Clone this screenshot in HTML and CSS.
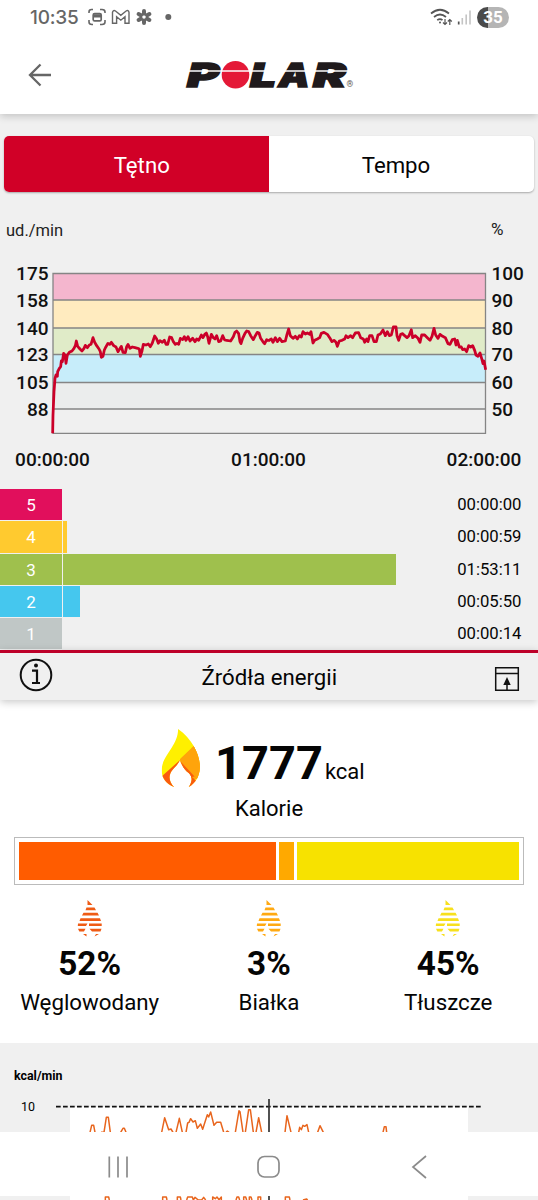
FILE: index.html
```html
<!DOCTYPE html>
<html lang="pl">
<head>
<meta charset="utf-8">
<meta name="viewport" content="width=device-width">
<title>Polar</title>
<link rel="stylesheet" href="styles.css">
</head>
<body>
<div class="screen">
  <header class="top">
    <div class="status">
      <span class="clock">10:35</span>
      <svg class="notif" width="86" height="20" viewBox="0 0 86 20" fill="none" stroke="#666" stroke-width="1.6">
        <path d="M1 5V4q0-2.500 2.500-2.500H5M12 1.500h2q3 0 3 2.500v1M17 12v2q0 2.500-3 2.500h-2M5 16.500H4q-3 0-3-2.500v-2"/>
        <rect x="5.200" y="5.600" width="8" height="7.200" rx="1.400" stroke-width="1.700"/><path d="M5.500 7.200h7.500M6 8.500h7" stroke-width="2"/>
        <path d="M24.500 15.300V4.300q.8-2.800 3-1.300l5.300 4.300 5.300-4.300q2.300-1.300 2.900 1.300v11h-4V8.700l-4.200 3.500-4.200-3.500v6.600z" stroke-width="1.400"/>
        <g stroke-width="4" stroke-linecap="round"><path d="M56 3v2.500M56 12.500V15M50.600 6l2.200 1.300M59.200 10.700l2.200 1.300M61.400 6l-2.200 1.300M52.800 10.700L50.600 12"/></g>
        <circle cx="56" cy="9" r="3" stroke-width="2"/>
        <circle cx="80.300" cy="9" r="3" fill="#666" stroke="none"/>
      </svg>
      <svg class="signal" width="42" height="20" viewBox="0 0 42 20" fill="none" stroke="#555" stroke-width="1.700">
        <path d="M1 5.500q9-7.500 18 0M4 9q6-5 12 0M7.200 12.200q2.800-2.200 5.300 0"/>
        <circle cx="10" cy="14.500" r="1" fill="#555" stroke="none"/>
        <path d="M15 11v5.500M13 14.500l2 2 2-2M19.800 17v-5.500M17.800 13.500l2-2 2 2" stroke-width="1.200"/>
        <path d="M28.700 13.500v3" stroke-width="1.700"/>
        <path d="M32.300 10v6.500M36.200 6.500v10M40 2.500v14" stroke="#c4c4c4" stroke-width="1.600"/>
      </svg>
      <span class="battery">35</span>
    </div>
    <div class="bar">
      <svg class="back" width="24" height="24" viewBox="0 0 24 24" fill="none" stroke="#666" stroke-width="2.300"><path d="M23 12H2.500M12.500 1.500L2 12l10.500 10.500"/></svg>
      <svg class="logo" width="180" height="50" viewBox="0 -10 180 50">
        <g class="wordmark"><text x="2" y="26.500" textLength="32" lengthAdjust="spacingAndGlyphs">P</text>
        <text x="65" y="26.500" textLength="26" lengthAdjust="spacingAndGlyphs">L</text>
        <text x="93.500" y="26.500" textLength="31" lengthAdjust="spacingAndGlyphs">A</text>
        <text x="128" y="26.500" textLength="33" lengthAdjust="spacingAndGlyphs">R</text></g>
        <circle cx="50.500" cy="14.700" r="13.800" fill="#e41937"/>
        <path d="M0 11h166" stroke="#fff" stroke-width="1.700"/>
        <text class="reg" x="161.500" y="26.500">®</text>
      </svg>
    </div>
  </header>

  <div class="tabs"><div class="tab on">Tętno</div><div class="tab">Tempo</div></div>

  <svg class="hr" width="538" height="280" viewBox="0 215 538 280">
    <text class="unit" x="6" y="236">ud./min</text><text class="unit" x="491" y="235" textLength="12.500" lengthAdjust="spacingAndGlyphs">%</text>
    <path d="M53 273.500h432v26.500H53z" fill="#f4b6ce"/>
    <path d="M53 300h432v28H53z" fill="#ffebbf"/>
    <path d="M53 328h432v26.500H53z" fill="#e0ebc8"/>
    <path d="M53 354.500h432v28H53z" fill="#c7edfa"/>
    <path d="M53 382.500h432v26.500H53z" fill="#ebeded"/>
    <path d="M53 273.500h432.500v159.800H53zM53 300h432M53 328h432M53 354.500h432M53 382.500h432M53 409h432" fill="none" stroke="#858585" stroke-width="1.300"/>
    <g class="axis" text-anchor="end"><text x="48.500" y="280">175</text><text x="48.500" y="306.500">158</text><text x="48.500" y="334.500">140</text><text x="48.500" y="361">123</text><text x="48.500" y="389">105</text><text x="48.500" y="415.500">88</text></g>
    <g class="axis"><text x="491.500" y="280">100</text><text x="491.500" y="306.500">90</text><text x="491.500" y="334.500">80</text><text x="491.500" y="361">70</text><text x="491.500" y="389">60</text><text x="491.500" y="415.500">50</text></g>
    <g class="axis" text-anchor="middle"><text x="52.500" y="465.500">00:00:00</text><text x="268.500" y="465.500">01:00:00</text><text x="484" y="465.500">02:00:00</text></g>
    <g transform="translate(0 215) scale(.33333)" fill="none" stroke="#cb0029" stroke-width="8.300" stroke-linejoin="round">
      <polyline points="158,655 159,600 162,530 165,490 168,480 172,484 173,470 178,460 182,455 184,438 187,440 191,415 195,420 198,445 202,420 208,412 216,408 222,400 226,392 229,378 233,394 240,402 246,408 252,400 256,391 262,398 268,390 273,388 279,368 284,382 290,392 297,402 301,410 304,427 309,424 313,405 318,395 324,385 329,388 334,382 341,392 348,396 354,410 359,402 364,394 369,412 376,413 380,395 384,388 390,400 397,396 405,398 413,400 418,402 421,424 426,408 430,388 438,390 445,387 451,395 457,384 464,363 470,372 475,385 480,377 487,382 493,376 498,388 503,388 509,366 515,368 520,380 526,388 531,385 536,388 541,370 548,374 553,365 558,376 564,365 570,378 578,370 585,380 590,372 596,376 604,360 609,368 615,357 619,354 623,365 627,385 631,370 634,358 640,368 645,372 650,362 656,380 662,378 668,362 674,375 680,376 692,378 700,365 705,352 710,348 716,356 720,380 723,386 728,370 735,355 740,348 746,350 752,362 760,374 766,362 772,352 777,354 782,370 790,382 794,386 800,374 805,378"/>
      <polyline transform="translate(804 0)" points="0,378 10,372 15,382 22,368 28,380 35,370 42,380 52,378 57,358 62,342 67,362 75,370 82,364 88,372 94,362 100,366 105,350 112,357 118,354 125,358 129,350 135,384 140,376 148,372 155,368 160,355 168,352 178,358 186,370 192,380 198,376 204,382 208,394 214,378 222,376 230,372 234,362 240,368 248,362 254,368 262,354 272,353 278,368 286,372 290,382 296,372 300,380 305,362 312,362 318,380 325,380 330,360 337,357 345,345 352,362 358,350 364,362 370,360 376,336 384,336 387,362 392,376 398,358 404,356 410,362 417,368 423,362 430,344 434,368 442,362 450,370 456,382 461,360 470,360 478,368 486,376 492,364 498,340 503,360 510,370 516,358 524,364 532,368 540,386 546,388 553,374 560,372 564,390 568,376 574,396 580,396 584,404 590,402 596,410 602,392 608,396 614,392 620,406 624,420 630,424 636,414 642,434 645,446 648,438 653,464"/>
    </g>
  </svg>

  <div class="zones">
    <div class="zone z5"><b>5</b><i style="width:0"></i><span>00:00:00</span></div>
    <div class="zone z4"><b>4</b><i style="width:3.500px"></i><span>00:00:59</span></div>
    <div class="zone z3"><b>3</b><i style="width:332.500px"></i><span>01:53:11</span></div>
    <div class="zone z2"><b>2</b><i style="width:17px"></i><span>00:05:50</span></div>
    <div class="zone z1"><b>1</b><i style="width:0"></i><span>00:00:14</span></div>
  </div>

  <div class="section">
    <svg width="34" height="34" viewBox="0 0 34 34"><circle cx="17" cy="17" r="15.300" fill="none" stroke="#111" stroke-width="2"/><circle cx="17" cy="7.500" r="2" fill="#111"/><path d="M13 12.700h5v12M13 25h8" fill="none" stroke="#111" stroke-width="2.200"/></svg>
    <span>Źródła energii</span>
    <svg width="26" height="26" viewBox="0 0 26 26"><path d="M1.700 1.700h22.600v22.600H1.700zM1.700 7.500h22.600M13 24v-8" fill="none" stroke="#111" stroke-width="1.500"/><path d="M13 11l3.700 8H9.300z" fill="#111"/></svg>
  </div>

  <main class="energy">
    <div class="total">
      <svg width="42" height="60" viewBox="0 0 42 62">
        <defs>
          <path id="flame" d="M18 0C34 11 41 29 40.500 40C40 49 36 56 29 60C34 52 32 47 27 44C24 41 21 36 20 32C16 40 12 41 10 46C8 51 10 56 14 60C6 57 1 51 1 43C1 27 18 18 18 0Z"/>
          <clipPath id="flameClip"><use href="#flame"/></clipPath>
        </defs>
        <g clip-path="url(#flameClip)"><path d="M0 0h42v62H0z" fill="#fff000"/><path d="M20 31L42 10v42H33L20 39z" fill="#ffa40b"/><path d="M0 50L20 32v7l22 19v4H0z" fill="#f95b0e"/><path d="M20 32L33 19l9-5v38h-4z" fill="#ffa40b"/><path d="M20 33l15 16-6 1-9-8z" fill="#f95b0e"/></g>
      </svg>
      <strong>1777</strong><span>kcal</span>
    </div>
    <div class="caption">Kalorie</div>
    <div class="split"><i class="carb"></i><i class="prot"></i><i class="fat"></i></div>
    <div class="shares">
      <div class="share"><svg class="drop" width="26" height="38" viewBox="0 0 26 38" fill="#ef5b14"><use href="#stripes"/></svg><strong>52%</strong><span>Węglowodany</span></div>
      <div class="share"><svg class="drop" width="26" height="38" viewBox="0 0 26 38" fill="#ffa912"><use href="#stripes"/></svg><strong>3%</strong><span>Białka</span></div>
      <div class="share"><svg class="drop" width="26" height="38" viewBox="0 0 26 38" fill="#f7e01c"><defs>
        <path id="stripes" d="M10.500 0L15.500 5h-5zM9.500 7.500h8l1.500 2.700H8.500zM6.500 12.800h14l1.500 2.700H5zM3.500 18.200h19.500l1 2.700H2.500zM1 23.400h9.500l-1.500 2.700H.8zM12 23.400h12.700v2.700H12zM1 28.700h7.500l-1.500 2.700H2.300zM12.500 28.700H24.500l-1 2.700H15zM6 34h3.500v2.500zM19 34h3l-4.500 2.500z"/></defs><use href="#stripes"/></svg><strong>45%</strong><span>Tłuszcze</span></div>
    </div>
  </main>

  <section class="rate">
    <svg width="538" height="157" viewBox="0 1043 538 157">
      <path d="M70 1107h398v93H70z" fill="#fff"/>
      <text class="rate-unit" x="14" y="1079.500" textLength="48.500" lengthAdjust="spacingAndGlyphs">kcal/min</text><text class="rate-tick" x="21" y="1111" textLength="14" lengthAdjust="spacingAndGlyphs">10</text>
      <g transform="translate(0 1040) scale(.33333)" fill="none" stroke="#e8651d" stroke-width="4.500" stroke-linejoin="round">
        <path d="M270 277L275 256h6L285 277M303 277h9L319 232h6L331 277M362 277L369 265h4L378 277M485 277L494 233 506 269 513 267 519 277M528 277L538 235 547 277M558 277L563 249 567 247 572 236 579 246 586 242 592 265 602 252 608 268 622 224 626 231 632 216 642 256 650 247 662 247 671 277M678 277l4-4 5 4M706 277L717 212 720 215 729 277M736 277L746 209h5L760 277M768 277L776 233 785 277"/>
        <path transform="translate(804 0)" d="M51 277L57 227 69 277M92 277L95 262 100 269 105 256 110 259 117 254 122 277M149 277L156 257 166 277M345 277L349 260h5L356 277"/>
        <path d="M316 480v-9h10l2 9M488 480v-9h11l2 9M532 480v-9h9l2 9M560 480l3-9h14l3 9 5-8 10 8 10 0 6-8 6 8M638 480v-9l8 5 5-5 6 8 7-8v9M708 480l3-9h5l3 9M731 480v-9h6l3 9M748 480v-9h5l3 9M774 480v-9h8v9M856 480v-9h12l2 9M909 480l11-3 3 3"/>
      </g>
      <path d="M56 1106.700h425" fill="none" stroke="#111" stroke-width="1.700" stroke-dasharray="4.700 2.300"/>
      <path d="M269 1099v101" stroke="#333" stroke-width="1.700"/>
    </svg>
  </section>

  <nav class="nav">
    <svg width="538" height="64" viewBox="0 1132 538 64" fill="none" stroke="#8b8b8b" stroke-width="1.700"><path d="M109.300 1156.500v21M118 1156.500v21M127 1156.500v21M426 1156l-13 11 13 11"/><rect x="258" y="1156.500" width="21" height="20.500" rx="6.500"/></svg>
  </nav>
</div>
</body>
</html>
```
FILE: styles.css
```css
* { box-sizing: border-box; }
body { margin: 0; font-family: Roboto, sans-serif; color: #050505; background: #f0f0f0; }
.screen { position: relative; width: 538px; height: 1200px; overflow: hidden; display: flex; flex-direction: column; }
svg { display: block; flex: none; }
.top { position: relative; flex: none; height: 114px; background: #fff; box-shadow: 0 2px 8px rgba(0,0,0,.2); }
.status { display: flex; align-items: center; height: 35px; padding: 0 30px; }
.clock { width: 58px; font: 500 19px/35px Inter, sans-serif; letter-spacing: -.2px; color: #666; }
.signal { margin-left: auto; }
.battery { width: 32px; height: 21px; margin: 0 -1px 0 5px; border-radius: 10.500px; text-align: center; font: 700 17px/21px Roboto, sans-serif; color: #fff; background: linear-gradient(90deg, #4a4a4a 35%, #b5b5b5 35%); }
.bar { display: flex; align-items: center; height: 79px; padding-left: 28px; }
.logo { margin-left: 133px; }
.wordmark { font: italic 900 33px/1 Inter, sans-serif; fill: #1f1a1c; stroke: #1f1a1c; stroke-width: 1.5px; }
.reg { font: 8.500px Roboto, sans-serif; fill: #555; }
.tabs { flex: none; display: flex; height: 56px; margin: 21.500px 4px 0; border-radius: 5px; overflow: hidden; background: #fff; box-shadow: 0 1px 2px rgba(0,0,0,.3); }
.tab { flex: none; width: 266px; text-align: center; font-size: 22.200px; line-height: 59px; padding-right: 11px; }
.tab.on { width: 264.500px; background: #d10027; color: #fff; padding-right: 0; padding-left: 11px; }
.hr { margin-top: 23.500px; }
.unit { font-size: 16.500px; fill: #222; }
.axis { font-size: 19px; font-weight: 500; fill: #111; }
.zones { flex: none; margin-top: -6px; display: flex; flex-direction: column; gap: 1px; height: 161px; }
.zone { display: flex; gap: 1px; height: 31.300px; line-height: 32px; }
.zone b { width: 62px; text-align: center; font-size: 17px; font-weight: 400; color: #fff; background: var(--c); }
.zone i { background: var(--c); }
.zone span { margin: 0 16.500px 0 auto; font-size: 16.700px; }
.z5 { --c: #e10f5c; } .z4 { --c: #ffca2f; } .z3 { --c: #9fc04d; } .z2 { --c: #45c7ee; } .z1 { --c: #c0c7c6; }
.section { position: relative; flex: none; height: 50px; display: flex; align-items: center; justify-content: space-between; padding: 0 18px 0 19px; border-top: 3px solid #bd0029; background: #f0f0f0; font-size: 22.200px; box-shadow: 0 2px 8px rgba(0,0,0,.22); }
.section svg:first-child { margin: -3px 0 0 -.5px; }
.section svg:last-child { margin: 5px 0 0 8px; }
.section span { padding-top: 1px; }
.energy { flex: none; height: 343px; background: #fff; }
.total { display: flex; align-items: flex-end; height: 89px; padding-left: 160px; }
.total strong { margin: 0 0 -2px 13px; font-size: 47px; line-height: 56px; }
.total span { margin-left: 2px; padding-bottom: 3px; font-size: 22px; line-height: 28px; }
.caption { text-align: center; font-size: 22px; line-height: 40px; }
.split { display: flex; gap: 3px; height: 48px; margin: 8px 14px 0; padding: 4px; border: 1.500px solid #bbb; }
.carb { width: 257px; background: #ff5c00; } .prot { width: 15px; background: #ffa900; } .fat { flex: 1; background: #f7e200; }
.shares { display: grid; grid-template-columns: repeat(3, 179.300px); margin-top: 15px; }
.share { display: flex; flex-direction: column; align-items: center; }
.share strong { font-size: 33.300px; line-height: 44px; margin-top: 4px; }
.share span { font-size: 22.300px; line-height: 32px; }
.rate { flex: none; background: #f0f0f0; }
.rate-unit { font-size: 13px; font-weight: 700; } .rate-tick { font-size: 13px; }
.nav { position: absolute; left: 0; bottom: 4px; background: #fff; }
```
